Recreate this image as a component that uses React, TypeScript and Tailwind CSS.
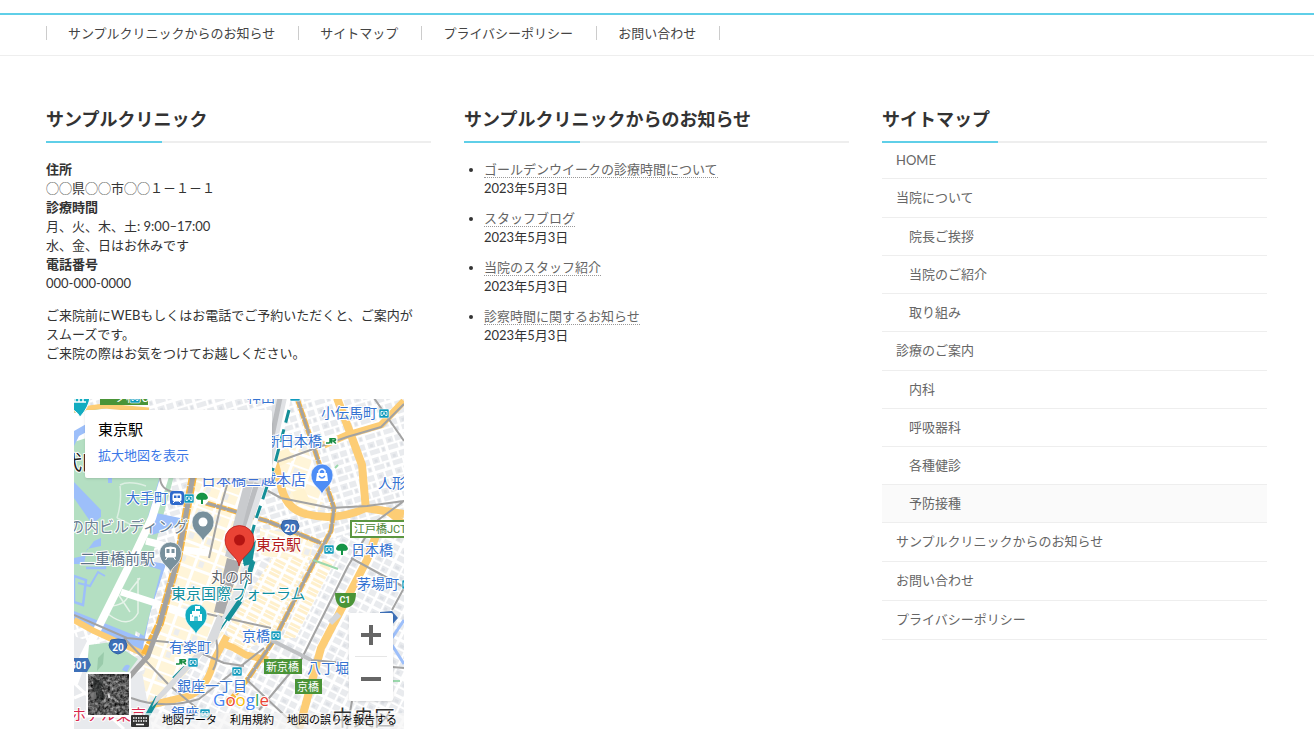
import React from 'react';

const navItems = ['サンプルクリニックからのお知らせ', 'サイトマップ', 'プライバシーポリシー', 'お問い合わせ'];

const newsItems = [
  { title: 'ゴールデンウイークの診療時間について', date: '2023年5月3日' },
  { title: 'スタッフブログ', date: '2023年5月3日' },
  { title: '当院のスタッフ紹介', date: '2023年5月3日' },
  { title: '診察時間に関するお知らせ', date: '2023年5月3日' },
];

type SitemapItem = { label: string; children?: string[] };

const sitemap: SitemapItem[] = [
  { label: 'HOME' },
  { label: '当院について', children: ['院長ご挨拶', '当院のご紹介', '取り組み'] },
  { label: '診療のご案内', children: ['内科', '呼吸器科', '各種健診', '予防接種'] },
  { label: 'サンプルクリニックからのお知らせ' },
  { label: 'お問い合わせ' },
  { label: 'プライバシーポリシー' },
];

const mapLabels = [
  { text: '神田', x: 173, y: 4, size: 14, color: '#3573d1' },
  { text: '小伝馬町', x: 247, y: 20, size: 14, color: '#3573d1' },
  { text: '新日本橋', x: 192, y: 48, size: 14, color: '#3573d1' },
  { text: '日本橋三越本店', x: 127, y: 87, size: 15, color: '#3f73d8' },
  { text: '人形町', x: 304, y: 90, size: 14, color: '#3573d1' },
  { text: '大手町', x: 52, y: 105, size: 14, color: '#3573d1' },
  { text: 'の内ビルディング', x: -5, y: 134, size: 15, color: '#6b7f93' },
  { text: '二重橋前駅', x: 6, y: 166, size: 15, color: '#5d7389' },
  { text: '東京駅', x: 182, y: 152, size: 15, color: '#b31b1b' },
  { text: '日本橋', x: 277, y: 157, size: 14, color: '#3573d1' },
  { text: '茅場町', x: 283, y: 191, size: 14, color: '#3573d1' },
  { text: '丸の内', x: 137, y: 184, size: 14, color: '#5f6368' },
  { text: '東京国際フォーラム', x: 97, y: 201, size: 15, color: '#12909f' },
  { text: '京橋', x: 168, y: 243, size: 14, color: '#3573d1' },
  { text: '有楽町', x: 95, y: 254, size: 14, color: '#3573d1' },
  { text: '八丁堀', x: 233, y: 275, size: 14, color: '#3573d1' },
  { text: '銀座一丁目', x: 103, y: 293, size: 14, color: '#3573d1' },
  { text: '銀座', x: 97, y: 320, size: 14, color: '#3573d1' },
  { text: 'ホテル東京', x: -3, y: 322, size: 15, color: '#d8294f' },
  { text: '代田', x: -12, y: 72, size: 20, color: '#222222' },
  { text: '中央区', x: 258, y: 327, size: 21, color: '#333333' },
];

const metroIcons = [
  [305, 11],
  [110, 96],
  [250, 147],
  [328, 182],
  [197, 233],
  [114, 260],
  [158, 269],
  [126, 311],
  [56, -4],
  [216, -6],
];

const FooterHeading: React.FC<{ children: React.ReactNode }> = ({ children }) => (
  <h2 className="relative border-b-2 border-[#eeeeee] pb-2 text-lg leading-7 font-bold text-[#333333]">
    {children}
    <span className="absolute -bottom-0.5 left-0 h-0.5 w-[30%] bg-[#5fcfe8]" />
  </h2>
);

const Shield: React.FC<{ x: number; y: number; label: string }> = ({ x, y, label }) => (
  <g transform={`translate(${x} ${y})`}>
    <path d="M-7-7Q0-9 7-7L9-2Q8 5 0 7Q-8 5-9-2Z" fill="#3d70b8" stroke="#2f5fa3" strokeWidth="1" />
    <text y="4" textAnchor="middle" fontSize="10" fontWeight="700" fill="#fff">{label}</text>
  </g>
);

const Metro: React.FC<{ x: number; y: number }> = ({ x, y }) => (
  <g transform={`translate(${x} ${y})`}>
    <rect width="10" height="9" rx="1" fill="#109bbd" stroke="#fff" strokeWidth=".6" />
    <path d="M3.800 2.500H2V6.500H3.500L5 4L6.500 6.500H8V2.500H6.200M5 2V4" fill="none" stroke="#fff" strokeWidth=".9" />
  </g>
);

const PlacePin: React.FC<{ x: number; y: number; color: string; children: React.ReactNode }> = ({ x, y, color, children }) => (
  <g transform={`translate(${x} ${y})`}>
    <path d="M0 20C-1 13-11 11-11 0A11 11 0 0 1 11 0C11 11 1 13 0 20Z" fill={color} stroke="#fff" strokeWidth=".7" />
    {children}
  </g>
);

const TreeMark: React.FC<{ x: number; y: number }> = ({ x, y }) => (
  <g transform={`translate(${x} ${y})`}>
    <circle r="7" fill="#fff" />
    <path d="M-6 0C-5-7 5-7 6 0C4 3 2 1 1 2V6H-1V2C-2 1-4 3-6 0Z" fill="#159447" />
  </g>
);

const JrMark: React.FC<{ x: number; y: number }> = ({ x, y }) => (
  <g transform={`translate(${x} ${y})`}>
    <rect x="-1.500" y="-2" width="13" height="9" rx="1" fill="#fff" />
    <path d="M0 5H3Q4 5 4 4V0M5.500 5.500V.7H8.500Q9.700 .7 9.500 2Q9.300 3 7 3L10 5.500" fill="none" stroke="#168c40" strokeWidth="1.500" />
  </g>
);

const MapDrawing: React.FC = () => (
  <svg viewBox="0 1 330 330" preserveAspectRatio="xMinYMin slice" className="block h-full w-full font-['Roboto','Noto_Sans_CJK_JP',sans-serif]" aria-hidden="true">
    <defs>
      <pattern id="blocksNorth" width="19" height="16" patternUnits="userSpaceOnUse" patternTransform="rotate(-17)">
        <rect width="19" height="16" fill="#fff" />
        <path d="M1 1H8V7H1ZM10 1H17V7H10ZM1 9H11V14H1ZM13 9H17V14H13Z" fill="#e9ebee" />
        <path d="M3 3H6V6H3ZM14 10H16V13H14Z" fill="#dde0e5" />
      </pattern>
      <pattern id="blocksSouth" width="20" height="17" patternUnits="userSpaceOnUse" patternTransform="rotate(27)">
        <rect width="20" height="17" fill="#fff" />
        <path d="M1 1H9V7H1ZM11 1H18V7H11ZM1 9H9V15H1ZM11 9H18V15H11Z" fill="#e9ebee" />
        <path d="M3 3H7V6H3ZM12 11H15V14H12Z" fill="#dde0e5" />
      </pattern>
      <pattern id="blocksCream" width="19" height="24" patternUnits="userSpaceOnUse" patternTransform="rotate(20)">
        <rect width="19" height="24" fill="#fff" />
        <path d="M1 1H17V11H1ZM1 13H17V22H1Z" fill="#fff5d9" />
        <path d="M3 14H8V20H3Z" fill="#ecedee" />
      </pattern>
      <pattern id="shopsCream" width="14" height="10" patternUnits="userSpaceOnUse" patternTransform="rotate(27)">
        <rect width="14" height="10" fill="#fff" />
        <path d="M1 1H12V4H1ZM1 5H12V8H1Z" fill="#fff0cc" />
      </pattern>
    </defs>

    {/* Ground */}
    <rect width="330" height="331" fill="url(#blocksNorth)" />
    <path d="M176 166L330 120V331H40L100 250Z" fill="url(#blocksSouth)" />
    <path d="M118 78L196 78L176 135L150 235L78 312L60 280L85 240L104 150Z" fill="url(#blocksCream)" />
    <path d="M196 60L232 45L252 112L225 112L206 92ZM186 130L240 140L236 162L186 158Z" fill="url(#blocksCream)" />
    <path d="M198 160L238 158L196 242L160 255L152 232Z" fill="url(#shopsCream)" />
    <path d="M244 160L262 162L222 240L208 240Z" fill="url(#shopsCream)" />
    <path d="M201 55L214 50L220 62L206 68ZM218 94L230 90L236 103L222 107Z" fill="#fff3d0" />
    <path d="M0 238L66 262L78 331H0Z" fill="#e8eaed" />
    <path d="M0 300L70 270M0 285L50 331M22 245L60 331M0 318H80" stroke="#fff" strokeWidth="3" />

    {/* Palace gardens and moat */}
    <path d="M0 10L60 8L92 20L100 78L75 170L60 242L0 215Z" fill="#b4dfc2" />
    <path d="M0 15L75 4V20L0 44Z" fill="#fff" />
    <path d="M0 33L14 25L18 31L5 38L0 48Z" fill="#9dbffa" />
    <path d="M0 84L27 112L27 119L18 126L0 100Z" fill="#9dbffa" />
    <path d="M34 79L38 79V85H34ZM86 78L90 78L82 115L106 120L105 128L78 137L70 132Z" fill="#9dbffa" />
    <path d="M20 143L27 140V148L13 151L10 166L0 166V160L9 158Z" fill="#9dbffa" />
    <path d="M92 166L76 215L68 254L45 246L0 222V213L40 229L65 239L80 198L76 180L50 168L56 160Z" fill="#9dbffa" />
    <path d="M55 162L87 172L70 238L34 216Z" fill="#b4dfc2" />
    <path d="M0 178L12 182L9 207L0 204ZM12 170H31V160" fill="none" stroke="#9dbffa" strokeWidth="2.500" />
    <path d="M4 185L16 188L24 174L31 178" fill="none" stroke="#9dbffa" strokeWidth="2" />
    <path d="M34 216Q55 232 64 215L64 180M38 208Q54 206 55 194L66 180M40 190L56 214" fill="none" stroke="#e6f3e9" strokeWidth="1.500" />
    <path d="M46 87Q55 82 72 88M46 88Q48 104 43 120M43 120L60 128" fill="none" stroke="#dcefe2" strokeWidth="1.500" />
    <path d="M91 78L78 120L59 160L10 258L0 285" fill="none" stroke="#fff" strokeWidth="8" />
    <path d="M47 194L112 215M72 143L104 151L135 155" fill="none" stroke="#fff" strokeWidth="7" />
    <path d="M15 247L38 244L64 261L50 280L12 280Z" fill="#b4dfc2" />
    <path d="M24 260L30 254L29 266L23 273Z" fill="#9acbab" />
    <path d="M48 272Q52 264 56 268L53 274Z" fill="#9dbffa" />

    {/* Arterial roads */}
    <g fill="none" stroke="#fdcd75" strokeLinejoin="round">
      <path d="M0 12L30 8L75 12" strokeWidth="5" />
      <path d="M263 0L277 37L288 67L292 112" strokeWidth="8" />
      <path d="M200 62L208 92Q214 112 232 116Q262 124 292 110L330 116" strokeWidth="8" />
      <path d="M304 132L293 162L247 250L225 331" strokeWidth="8" />
      <path d="M312 112L330 126" strokeWidth="7" />
      <path d="M330 3L307 27L273 37L250 47" strokeWidth="7" />
      <path d="M148 245L160 250L172 257L194 262" strokeWidth="7" />
      <path d="M153 238L140 262Q134 290 115 298L77 307" strokeWidth="7" />
      <path d="M0 222L20 233L70 256" strokeWidth="6" />
    </g>
    <g fill="none" stroke="#fbb73f" strokeWidth="5" strokeDasharray="10 1">
      <path d="M223 0L240 50L260 110L257 133L237 170L200 242L173 282L153 306" />
      <path d="M132 105L193 123L247 145" />
      <path d="M119 78L104 160L86 225L70 258" strokeWidth="8" />
    </g>
    <g fill="none" stroke="#a3a3a3" strokeWidth="2" strokeLinejoin="round">
      <path d="M223 0L240 50L260 110L257 133L237 170L200 242L173 282" strokeWidth="3" />
      <path d="M132 105L193 123L247 145" strokeWidth="3" />
      <path d="M119 78L104 160L86 225L74 258L50 285" strokeWidth="5" />
      <path d="M86 80Q87 92 100 94M155 80L145 115L135 160" />
      <path d="M330 6L307 29L273 39L200 65" />
      <path d="M183 87L207 100L257 110L293 108L330 103L300 125L274 168L227 262L185 312" />
      <path d="M300 0L330 43M277 160L330 189M0 217L53 240L103 245L150 265L170 268" />
      <path d="M197 242L237 262L330 270M50 240L95 287L125 312" />
      <path d="M173 282L225 331M57 300Q90 312 125 301L190 250" />
      <path d="M330 190L318 212M278 303L273 331M125 214L197 230M142 240Q146 260 139 272" />
    </g>
    <path d="M197 242L237 262" stroke="#bfc1c4" strokeWidth="4" />

    {/* Railway corridor */}
    <path d="M208 0L192 65L170 125L162 160" fill="none" stroke="#e0e2e5" strokeWidth="15" />
    <path d="M175 165L165 190L148 228" fill="none" stroke="#e3e5e8" strokeWidth="7" />
    <path d="M206 0L193 62M183 85L164 145" stroke="#bbbdc0" strokeWidth="5" />
    <path d="M153 160L167 164L150 216L140 214Z" fill="#aaaaac" />
    <path d="M180 82L160 162L151 158L171 82Z" fill="#c9cbce" />
    <path d="M215 0L201 65L181 124L170 166" fill="none" stroke="#fff" strokeWidth="4" />
    <path d="M215 12L201 65L181 124L170 166" fill="none" stroke="#158f98" strokeWidth="3" strokeDasharray="13 7" />
    <path d="M179 162L168 200L139 242L103 278" fill="none" stroke="#fff" strokeWidth="4" />
    <path d="M179 162L168 200L139 242" fill="none" stroke="#158f98" strokeWidth="1.500" />
    <path d="M179 163L175 176M166 203L153 222M117 264L100 281M84 299L72 320" fill="none" stroke="#158f98" strokeWidth="5" />
    <path d="M168 158L182 142L178 166L170 168Z" fill="#158f98" />
    <path d="M144 216L150 222L144 240L92 296L78 309L82 299L132 244Z" fill="#d9dbde" />
    <path d="M318 240L330 222M318 247L330 266" stroke="#9dbffa" strokeWidth="3" />
    <path d="M239 162L264 171M261 70L264 67M313 283H326" stroke="#9bd8ac" strokeWidth="2" />
    <path d="M256 225L265 216" stroke="#d4d7db" strokeWidth="6" />

    {/* Place names */}
    {mapLabels.map((label) => (
      <text key={`${label.text}-${label.y}`} x={label.x} y={label.y} fontSize={label.size} fill={label.color} stroke="#fff" strokeWidth="2" strokeLinejoin="round" paintOrder="stroke">
        {label.text}
      </text>
    ))}

    {/* Expressway signs */}
    <rect x="26" y="-8" width="48" height="15" fill="#4a9437" />
    <text x="28" y="4" fontSize="12" fill="#fff">一ツ橋IC</text>
    <rect x="277" y="123" width="60" height="16" fill="#fff" stroke="#5c9641" strokeWidth="2" />
    <text x="280" y="135" fontSize="11" fill="#4a8433">江戸橋JCT</text>
    <rect x="190" y="261" width="38" height="15" fill="#4a9437" />
    <text x="192" y="273" fontSize="11" fill="#fff">新京橋</text>
    <rect x="221" y="281" width="27" height="15" fill="#4a9437" />
    <text x="223" y="293" fontSize="11" fill="#fff">京橋</text>
    <path d="M261 195H282Q282 209 271 210Q261 209 261 195Z" fill="#4a9437" />
    <text x="271" y="205" textAnchor="middle" fontSize="9" fontWeight="700" fill="#fff">C1</text>
    <Shield x={216} y={130} label="20" />
    <Shield x={44} y={249} label="20" />
    <path d="M-4 260H14L17 267L13 274H-4Z" fill="#3d70b8" />
    <text x="-4" y="271" fontSize="10" fontWeight="700" fill="#fff">301</text>
    <path d="M306 214L318 213L324 220L316 229H306Z" fill="#3d70b8" />

    {metroIcons.map(([x, y]) => (
      <Metro key={`${x}-${y}`} x={x} y={y} />
    ))}
    <rect x="96" y="93" width="14" height="14" rx="3" fill="#2d69cc" />
    <path d="M100 96H106Q107 96 107 97V102Q107 103 106 103H100Q99 103 99 102V97Q99 96 100 96ZM101 103L99 105M105 103L107 105" fill="#fff" stroke="#fff" />
    <path d="M100 97.500H102.500V100H100ZM103.500 97.500H106V100H103.500Z" fill="#2d69cc" />
    <TreeMark x={128} y={100} />
    <TreeMark x={268} y={151} />
    <JrMark x={252} y={40} />
    <JrMark x={102} y={261} />

    {/* Points of interest */}
    <PlacePin x={129} y={124} color="#78909c"><circle r="4.500" fill="#fff" /></PlacePin>
    <PlacePin x={96.500} y={155} color="#78909c">
      <path d="M-5-5Q0-7 5-5V3Q5 4 4 4H-4Q-5 4-5 3ZM-3 4L-5 7M3 4L5 7" fill="#fff" stroke="#fff" />
      <path d="M-4-4H-1V0H-4ZM1-4H4V0H1Z" fill="#78909c" />
    </PlacePin>
    <PlacePin x={248} y={77} color="#4d8df6">
      <path d="M-5-2H5L6 6H-6Z" fill="#fff" />
      <path d="M-3-1V-4Q0-8 3-4V-1" fill="none" stroke="#fff" strokeWidth="1.500" />
      <path d="M-3 1Q0 5 3 1" fill="none" stroke="#4d8df6" strokeWidth="1.300" />
    </PlacePin>
    <PlacePin x={122} y={217} color="#12acc0">
      <path d="M-6-1H-4V-4H-1V-9H4V-6H0V-4H4V-1H6V6H-6Z" fill="#fff" />
      <path d="M-1 6V2H1V6M-4 1H-3M3 1H4" stroke="#12acc0" strokeWidth="1.200" fill="none" />
    </PlacePin>
    <path d="M-9-1H16Q15 9 6 19Q2 11-9 9Z" fill="#12acc0" stroke="#fff" />
    <path d="M-1 4H12M1 4V0M5 4V0M9 4V0" stroke="#fff" strokeWidth="1.500" />
    <path d="M165 168C164 158 151 155 151 142A14.500 14.500 0 0 1 180 142C180 155 167 158 165 168Z" fill="#ea4335" stroke="#b31412" strokeWidth=".7" />
    <circle cx="165.500" cy="142" r="5.500" fill="#b31412" />
    <text x="139" y="308" fontSize="17" fontWeight="500" stroke="#fff" strokeWidth="2" paintOrder="stroke" className="font-['Open_Sans',sans-serif]">
      <tspan fill="#4285f4">G</tspan><tspan fill="#ea4335">o</tspan><tspan fill="#fbbc05">o</tspan><tspan fill="#4285f4">g</tspan><tspan fill="#34a853">l</tspan><tspan fill="#ea4335">e</tspan>
    </text>
  </svg>
);

const SatelliteThumb: React.FC = () => (
  <svg viewBox="0 0 42 42" className="block h-full w-full" aria-hidden="true">
    <filter id="terrain" x="0" y="0" width="100%" height="100%" colorInterpolationFilters="sRGB">
      <feTurbulence type="fractalNoise" baseFrequency=".3" numOctaves="4" seed="8" />
      <feColorMatrix values=".8 .5 0 0 -.3  .8 .5 0 0 -.3  .8 .5 0 0 -.3  0 0 0 0 1" />
    </filter>
    <rect width="42" height="42" filter="url(#terrain)" />
    <path d="M5 5L16 7L13 15L18 23L12 30L6 23Z" fill="#202323" opacity=".6" />
    <path d="M16 0L24 16L20 42M42 7L23 18L42 31" fill="none" stroke="#777" strokeWidth=".7" opacity=".7" />
    <path d="M2 20L8 18L9 25L4 27Z" fill="#7b7b7b" opacity=".8" />
    <path d="M20 21L22 20L23 24L21 25Z" fill="#d5d5d5" />
  </svg>
);

const GoogleMap: React.FC = () => (
  <div className="relative mt-9 mr-[27px] ml-7 h-[330px] overflow-hidden bg-[#e8eaed] font-['Roboto','Noto_Sans_CJK_JP',sans-serif]">
    <MapDrawing />
    <div className="absolute top-[11px] left-[11px] w-[187px] rounded-xs bg-white px-[13px] pt-2 pb-2.5 shadow">
      <p className="text-[15px] leading-[25px] text-black">東京駅</p>
      <a href="#map" className="block text-[13px] leading-[25px] text-[#3b78e7]">拡大地図を表示</a>
    </div>
    <button type="button" aria-label="航空写真を表示" className="absolute bottom-3 left-3 size-[45px] overflow-hidden rounded-xs border-2 border-white">
      <SatelliteThumb />
    </button>
    <div className="absolute right-[11px] bottom-7 flex w-11 flex-col rounded-xs bg-white px-1.5 shadow">
      <button type="button" aria-label="拡大" className="flex h-11 items-center justify-center border-b border-[#e6e6e6]">
        <svg viewBox="0 0 20 20" className="size-5 fill-[#666666]"><path d="M8 0H12V8H20V12H12V20H8V12H0V8H8Z" /></svg>
      </button>
      <button type="button" aria-label="縮小" className="flex h-11 items-center justify-center">
        <svg viewBox="0 0 20 20" className="size-5 fill-[#666666]"><path d="M0 8H20V12H0Z" /></svg>
      </button>
    </div>
    <div className="absolute right-0 bottom-0 flex h-4 items-center gap-[13px] bg-[#f5f5f5]/70 pr-[7px] text-[11px] leading-4 text-black">
      <button type="button" aria-label="キーボード ショートカット">
        <svg viewBox="0 0 18 12" className="h-3 w-[18px]">
          <rect width="18" height="12" rx="1" fill="#333" />
          <path d="M2 3H16M2 6H16" stroke="#fff" strokeWidth="1.500" strokeDasharray="1.500 1" />
          <path d="M5 9.500H13" stroke="#fff" strokeWidth="1.500" />
        </svg>
      </button>
      <button type="button">地図データ</button>
      <a href="#terms">利用規約</a>
      <a href="#report">地図の誤りを報告する</a>
    </div>
  </div>
);

const App: React.FC = () => {
  return (
    <footer className="mt-[13px] border-t-2 border-[#5fcfe8] bg-white font-['Lato','Noto_Sans_CJK_JP',sans-serif] text-[13px] leading-[19px] text-[#333333]">
      <nav className="border-b border-[#eeeeee] px-[46px] pt-2.5 pb-3.5">
        <ul className="flex h-4 items-center">
          {navItems.map((item) => (
            <li key={item} className="border-r border-[#cccccc] pr-[23px] pl-[21px] leading-[14px] first:border-l">
              <a href="#page" className="text-[#444444]">{item}</a>
            </li>
          ))}
        </ul>
      </nav>

      <div className="grid grid-cols-3 gap-[33px] pt-[49px] pr-[47px] pb-2.5 pl-[46px]">
        <section>
          <FooterHeading>サンプルクリニック</FooterHeading>
          <div className="mt-[17px] space-y-[13px] pr-2">
            <p>
              <strong>住所</strong><br />
              ◯◯県◯◯市◯◯１－１－１<br />
              <strong>診療時間</strong><br />
              月、火、木、土: 9:00–17:00<br />
              水、金、日はお休みです<br />
              <strong>電話番号</strong><br />
              000-000-0000
            </p>
            <p>
              ご来院前にWEBもしくはお電話でご予約いただくと、ご案内がスムーズです。<br />
              ご来院の際はお気をつけてお越しください。
            </p>
          </div>
          <GoogleMap />
        </section>

        <section>
          <FooterHeading>サンプルクリニックからのお知らせ</FooterHeading>
          <ul className="mt-[17px] list-disc space-y-[11px] pl-5">
            {newsItems.map((item) => (
              <li key={item.title}>
                <a href="#news" className="border-b border-dotted border-[#999999] text-[#666666]">{item.title}</a>
                <time className="block">{item.date}</time>
              </li>
            ))}
          </ul>
        </section>

        <section>
          <FooterHeading>サイトマップ</FooterHeading>
          <ul className="text-[#666666]">
            {sitemap.map((item) => (
              <li key={item.label} className="group">
                <a href="#page" className="block border-b border-[#eeeeee] px-3.5 pt-[9px] pb-2.5 group-first:py-2">{item.label}</a>
                {item.children && (
                  <ul>
                    {item.children.map((child) => (
                      <li key={child}>
                        <a href="#page" className={`block border-b border-[#eeeeee] py-[9px] pr-3.5 pl-[27px] ${child === '予防接種' ? 'bg-[#fafafa]' : ''}`}>{child}</a>
                      </li>
                    ))}
                  </ul>
                )}
              </li>
            ))}
          </ul>
        </section>
      </div>
    </footer>
  );
};

export default App;
